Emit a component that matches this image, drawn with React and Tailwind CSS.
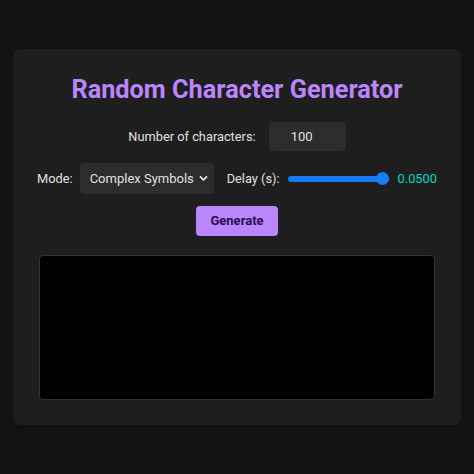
import { useState } from 'react';

// Dark-mode generator card: controls on top, black output pane below.
export default function App() {
  const [count, setCount] = useState('100');
  const [mode, setMode] = useState('complex');

  return (
    <div
      className="min-h-screen flex items-center justify-center bg-[#121212] px-[13px] text-[#e0e0e0]"
      style={{ fontFamily: 'Roboto, "Liberation Sans", sans-serif' }}
    >
      <div className="w-full bg-[#1e1e1e] rounded-lg px-[26px] pt-[24px] pb-[25px] flex flex-col items-center">
        <h1 className="text-[25.3px] leading-[34px] font-bold text-[#bb86fc] whitespace-nowrap">
          Random Character Generator
        </h1>

        <div className="mt-[15px] flex items-center gap-[13px] text-[12.8px] whitespace-nowrap">
          <label>Number of characters:</label>
          <input
            type="text"
            value={count}
            onChange={(e) => setCount(e.target.value)}
            className="w-[77px] h-[29px] rounded bg-[#2c2c2c] pl-[22px] text-[13px] text-[#e0e0e0] outline-none"
          />
        </div>

        <div className="mt-[12px] flex items-center text-[12.8px] whitespace-nowrap">
          <label>Mode:</label>
          <div className="relative ml-[7px]">
            <select
              value={mode}
              onChange={(e) => setMode(e.target.value)}
              className="appearance-none w-[134px] h-[31px] rounded bg-[#2c2c2c] pl-[10px] text-[13px] text-[#e0e0e0] outline-none"
            >
              <option value="simple">Simple</option>
              <option value="complex">Complex Symbols</option>
            </select>
            <svg
              className="absolute right-[6px] top-[12px] pointer-events-none"
              width="9"
              height="7"
              viewBox="0 0 9 7"
              fill="none"
            >
              <path d="M1.5 1.8 4.5 4.8 7.5 1.8" stroke="#e0e0e0" strokeWidth="1.8" strokeLinecap="round" strokeLinejoin="round" />
            </svg>
          </div>
          <label className="ml-[13px]">Delay (s):</label>
          <div className="ml-[8px] w-[101px] h-[12px] relative flex items-center">
            <div className="w-full h-[6px] rounded-full bg-[#1a7cf5]" />
            <div className="absolute right-0 w-[13px] h-[13px] rounded-full bg-[#1a7cf5]" />
          </div>
          <span className="ml-[9px] text-[#03dac6]">0.0500</span>
        </div>

        <button className="mt-[12px] w-[82px] h-[30px] rounded bg-[#bb86fc] text-[13px] font-bold text-[#2a0b4f]">
          Generate
        </button>

        <div className="mt-[19px] w-full h-[145px] bg-black border border-[#333333] rounded" />
      </div>
    </div>
  );
}
